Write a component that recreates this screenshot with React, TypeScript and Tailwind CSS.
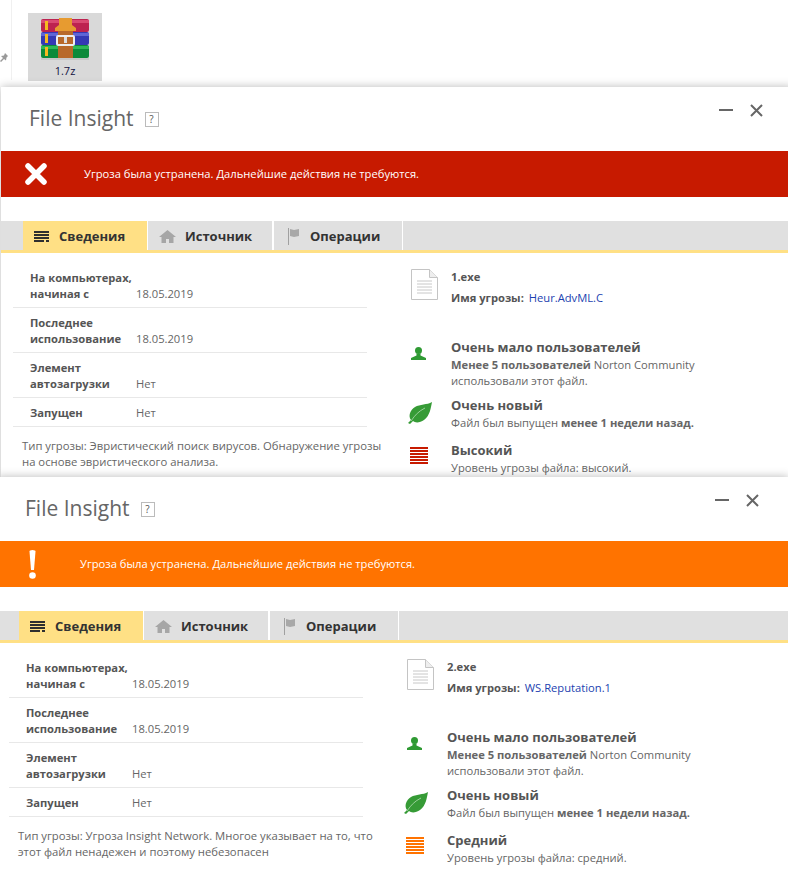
import type { ReactNode } from 'react';

function RarIcon() {
  return (
    <svg width="50" height="42" viewBox="0 0 50 42">
      <rect x="1" y="1" width="48" height="13" rx="2" fill="#bd2350" />
      <rect x="1" y="2" width="48" height="3" fill="#d94a72" />
      <rect x="1" y="14" width="48" height="13" rx="2" fill="#3539b4" />
      <rect x="1" y="15" width="48" height="3" fill="#5f66d6" />
      <rect x="1" y="27" width="48" height="13" rx="2" fill="#0c8a3a" />
      <rect x="1" y="28" width="48" height="3" fill="#2fb957" />
      <rect x="1" y="40" width="48" height="2" fill="#c8c8c8" />
      <rect x="5" y="3" width="3" height="9" fill="#f6b81f" />
      <rect x="5" y="16" width="3" height="9" fill="#f6b81f" />
      <rect x="5" y="29" width="3" height="9" fill="#f6b81f" />
      <rect x="18" y="12" width="15" height="28" fill="#b8692a" />
      <path d="M19 0h13v7l4 3v3H15v-3l4-3z" fill="#e79b30" />
      <rect x="17" y="18" width="17" height="9" rx="1" fill="none" stroke="#eee" strokeWidth="2" />
      <rect x="24" y="19" width="3" height="6" fill="#ddd" />
    </svg>
  );
}

function LinesIcon() {
  return (
    <svg width="15" height="12" viewBox="0 0 15 12" fill="#2f2f2f">
      <rect width="15" height="2" />
      <rect y="3" width="15" height="2" />
      <rect y="6" width="15" height="2" />
      <rect y="9" width="10" height="2" />
      <rect x="12" y="9" width="3" height="2" />
    </svg>
  );
}

function HomeIcon() {
  return (
    <svg width="17" height="13" viewBox="0 0 17 13" fill="#a6a6a6">
      <path d="M8.500 0L17 7h-2.500v6H10V9H7v4H2.500V7H0z" />
    </svg>
  );
}

function FlagIcon() {
  return (
    <svg width="12" height="17" viewBox="0 0 12 17">
      <rect width="1" height="17" fill="#a0a0a0" />
      <path d="M2 1l4 1 5-1v7l-5 1-4-1z" fill="#a8a8a8" />
    </svg>
  );
}

function DocIcon() {
  return (
    <svg width="27" height="31" viewBox="0 0 27 31" fill="none">
      <path d="M.500.500h18l8 8v22H.500z" fill="#fff" stroke="#c4c4c4" />
      <path d="M18.500.500v8h8" fill="#eee" stroke="#c4c4c4" />
      <path d="M6 12h15M6 15h15M6 18h15M6 21h15M6 24h15" stroke="#c8c8c8" />
    </svg>
  );
}

function UserIcon() {
  return (
    <svg width="15" height="13" viewBox="0 0 15 13" fill="#2f9a33">
      <circle cx="7.500" cy="3.600" r="3.500" />
      <path d="M5.500 6.500h4V8.500L15 11v2H0v-2l5.500-2.500z" />
    </svg>
  );
}

function LeafIcon() {
  return (
    <svg width="24" height="22" viewBox="0 0 24 22">
      <path d="M24 0c-1 5-2 14-8 18-4 3-9 3-11 1l-3 3-2-1 3-3C0 14 2 8 7 5c5-3 12-2 17-5z" fill="#369b36" />
      <path d="M3 19C7 13 11 9 17 6" stroke="#9ad09a" strokeWidth="1" fill="none" />
    </svg>
  );
}

function LevelIcon({ color }: { color: string }) {
  return (
    <svg width="18" height="17" viewBox="0 0 18 17" fill={color}>
      {[0, 3, 6, 9, 12, 15].map((y) => (
        <rect key={y} y={y} width="18" height="2" />
      ))}
    </svg>
  );
}

function Row({ label, value, last }: { label: ReactNode; value: string; last?: boolean }) {
  return (
    <div className={`flex items-end border-b border-[#e8e8e8] pt-[7px] pb-[5px] ${last ? 'mb-[11px]' : ''}`}>
      <div className="w-[107px] shrink-0 pl-[17px] font-bold text-[#555] whitespace-nowrap">{label}</div>
      <div className="pl-4 text-[#666]">{value}</div>
    </div>
  );
}

function Info({ icon, title, children, className }: { icon: ReactNode; title: string; children: ReactNode; className?: string }) {
  return (
    <div className={`flex ${className ?? ''}`}>
      <div className="w-10 shrink-0">{icon}</div>
      <div>
        <div className="text-[13px] leading-[18px] font-bold text-[#555]">{title}</div>
        <div className="mt-px text-[#666]">{children}</div>
      </div>
    </div>
  );
}

type PanelProps = {
  level: 'high' | 'medium';
  file: string;
  threat: string;
  note: ReactNode;
  levelTitle: string;
  levelText: string;
  className: string;
};

function Panel({ level, file, threat, note, levelTitle, levelText, className }: PanelProps) {
  const high = level === 'high';
  return (
    <div className={`w-[792px] shrink-0 overflow-hidden bg-white shadow-[0_0_9px_rgba(0,0,0,0.28)] ${className}`}>
      {/* заголовок */}
      <div className="flex h-16 items-center pr-[30px] pl-7">
        <span className="text-[21px] text-[#666]">File Insight</span>
        <span className="ml-[11px] flex h-[15px] w-[14px] items-center justify-center border border-[#bbb] text-[10px] text-[#555]">?</span>
        <div className="mb-[18px] ml-auto flex items-center gap-[17px]">
          <div className="h-0.5 w-[14px] bg-[#666]" />
          <svg width="13" height="13" viewBox="0 0 13 13" stroke="#666" strokeWidth="2">
            <path d="M1 1l11 11M12 1L1 12" />
          </svg>
        </div>
      </div>

      {/* баннер */}
      <div className={`flex h-[46px] items-center text-[11.2px] text-white ${high ? 'bg-[#c71a00]' : 'bg-[#ff7300]'}`}>
        <div className="w-[83px] shrink-0">
          {high ? (
            <svg className="ml-[23px]" width="24" height="24" viewBox="0 0 24 24" stroke="#fff" strokeWidth="5.500" strokeLinecap="round">
              <path d="M4 4l16 16M20 4L4 20" />
            </svg>
          ) : (
            <svg className="ml-[32px]" width="7" height="29" viewBox="0 0 7 29" fill="#fff">
              <path d="M.500 1.500a3 1.500 0 016 0L5 20H2z" />
              <circle cx="3.500" cy="25.500" r="3.300" />
            </svg>
          )}
        </div>
        <span>Угроза была устранена. Дальнейшие действия не требуются.</span>
      </div>

      {/* вкладки */}
      <div className="mt-6 flex h-8 border-b-[3px] border-[#ffe085] bg-[#e0e0e0] pl-[22px] text-[13px] font-bold text-[#333]">
        <div className="flex w-[125px] items-center gap-[10px] border-r border-white bg-[#ffe085] pt-0.5 pl-[11px]">
          <LinesIcon />
          Сведения
        </div>
        <div className="flex w-[126px] items-center gap-[9px] border-r-2 border-white pt-0.5 pl-[11px]">
          <HomeIcon />
          Источник
        </div>
        <div className="flex w-[129px] items-center gap-[10px] border-r border-white pt-0.5 pl-[14px]">
          <FlagIcon />
          Операции
        </div>
      </div>

      <div className="flex text-[11.2px] leading-4">
        {/* левая колонка */}
        <div className="ml-3 w-[354px] shrink-0 pt-[10px]">
          <Row label={<>На компьютерах,<br />начиная с</>} value="18.05.2019" />
          <Row label={<>Последнее<br />использование</>} value="18.05.2019" />
          <Row label={<>Элемент<br />автозагрузки</>} value="Нет" />
          <Row label="Запущен" value="Нет" last />
          <p className="pl-[9px] text-[11.3px] whitespace-nowrap text-[#666]">{note}</p>
        </div>

        {/* правая колонка */}
        <div className="ml-11 pt-4">
          <div className="flex">
            <div className="w-10 shrink-0">
              <DocIcon />
            </div>
            <div>
              <div className="font-bold text-[#555]">{file}</div>
              <div className="mt-[5px] text-[#555]">
                <span className="font-bold">Имя угрозы:</span> <span className="ml-0.5 text-[#1c3fb0]">{threat}</span>
              </div>
            </div>
          </div>
          <Info
            className="mt-8"
            icon={<div className="pt-[9px]"><UserIcon /></div>}
            title="Очень мало пользователей"
          >
            <span className="font-bold">Менее 5 пользователей</span> Norton Community
            <br />
            использовали этот файл.
          </Info>
          <Info
            className="mt-[7px]"
            icon={<div className="-ml-[3px] pt-[6px]"><LeafIcon /></div>}
            title="Очень новый"
          >
            Файл был выпущен <span className="font-bold">менее 1 недели назад.</span>
          </Info>
          <Info
            className="mt-[10px]"
            icon={<div className="-ml-px pt-[6px]"><LevelIcon color={high ? '#c71a00' : '#ff7300'} /></div>}
            title={levelTitle}
          >
            {levelText}
          </Info>
        </div>
      </div>
    </div>
  );
}

export default function App() {
  return (
    <div className="flex h-[892px] w-[788px] flex-col overflow-hidden bg-white font-['Open_Sans',sans-serif]">
      {/* рабочий стол */}
      <div className="flex h-[87px] shrink-0 items-start">
        <div className="flex h-20 w-3 shrink-0 items-center border-r border-[#f0f0f0]">
          <svg className="mt-[36px]" width="8" height="10" viewBox="0 0 8 10" fill="#999">
            <path d="M5 0l3 3-1.500 1.500-.5 3L4 6 1 9 0 8l3-3-2-2 3-.5z" />
          </svg>
        </div>
        <div className="mt-[13px] ml-4 flex h-[68px] w-[74px] flex-col items-center bg-[#d9d9d9] pt-[5px]">
          <RarIcon />
          <span className="mt-[3px] text-[11px] leading-4 text-[#101040]">1.7z</span>
        </div>
      </div>

      <Panel
        className="ml-px h-[390px]"
        level="high"
        file="1.exe"
        threat="Heur.AdvML.C"
        note={<>Тип угрозы: Эвристический поиск вирусов. Обнаружение угрозы<br />на основе эвристического анализа.</>}
        levelTitle="Высокий"
        levelText="Уровень угрозы файла: высокий."
      />
      <Panel
        className="relative -ml-[3px] h-[415px]"
        level="medium"
        file="2.exe"
        threat="WS.Reputation.1"
        note={<>Тип угрозы: Угроза Insight Network. Многое указывает на то, что<br />этот файл ненадежен и поэтому небезопасен</>}
        levelTitle="Средний"
        levelText="Уровень угрозы файла: средний."
      />
    </div>
  );
}
